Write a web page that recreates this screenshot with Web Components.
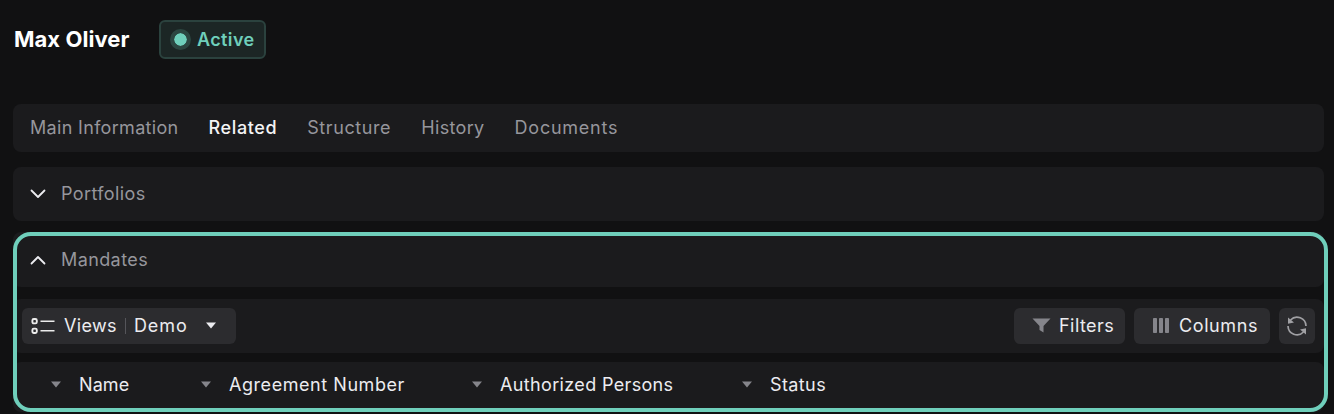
<!DOCTYPE html>
<html>
<head>
<meta charset="utf-8">
<style>
  html, body { margin: 0; height: 414px; overflow: hidden; background: #111112; }
  body { font-family: Inter, "Liberation Sans", sans-serif; color: #fff; }
</style>
</head>
<body>
<template id="caret"><svg width="12" height="7" viewBox="0 0 12 7"><path d="M1 0.5h10L6 6.5z" fill="currentColor"/></svg></template>

<detail-page>
  <person-header name="Max Oliver" status="Active"></person-header>
  <tab-bar active="Related"></tab-bar>
  <fold-panel title="Portfolios"></fold-panel>
  <mandates-box>
    <fold-panel title="Mandates" open></fold-panel>
    <grid-toolbar></grid-toolbar>
    <grid-head></grid-head>
  </mandates-box>
</detail-page>

<script>
const caret = () => document.getElementById('caret').innerHTML;

class DetailPage extends HTMLElement {
  constructor() {
    super();
    this.attachShadow({mode: 'open'}).innerHTML = `
    <style>
      :host { display: flex; flex-direction: column; padding: 0 10px 0 13px; }
    </style>
    <slot></slot>`;
  }
}

class PersonHeader extends HTMLElement {
  connectedCallback() {
    this.attachShadow({mode: 'open'}).innerHTML = `
    <style>
      :host { display: flex; align-items: center; height: 59px; padding-top: 20px; box-sizing: border-box; margin-bottom: 45px; }
      .name { font-size: 22px; font-weight: 700; width: 146px; padding-left: 1px; padding-bottom: 1px; box-sizing: border-box; letter-spacing: 0.05px; }
      .badge { display: flex; align-items: center; height: 39px; width: 107px; box-sizing: border-box; padding-left: 9px; gap: 6px;
        background: #1c2625; border: 2px solid #2b423e; border-radius: 6px; color: #6fcfbb; font-size: 18px; font-weight: 600; letter-spacing: 0.4px; }
      .dot { width: 13px; height: 13px; border-radius: 50%; background: #6fcfbb; border: 4px solid #2c4641; box-sizing: content-box; background-clip: padding-box; }
    </style>
    <span class="name">${this.getAttribute('name')}</span>
    <span class="badge"><span class="dot"></span>${this.getAttribute('status')}</span>`;
  }
}

class TabBar extends HTMLElement {
  connectedCallback() {
    const active = this.getAttribute('active');
    const tabs = [['Main Information', .32], ['Related', .6], ['Structure', .6], ['History', .35], ['Documents', .75]]
      .map(t => `<span class="tab ${t[0] === active ? 'on' : ''}" style="letter-spacing:${t[1]}px">${t[0]}</span>`).join('');
    this.attachShadow({mode: 'open'}).innerHTML = `
    <style>
      :host { display: flex; align-items: center; height: 48px; gap: 30px; padding-left: 17px; padding-bottom: 1px; box-sizing: border-box; background: #1b1b1d; border-radius: 8px; margin-bottom: 15px; font-size: 18px; }
      .tab { color: #96969c; }
      .on { color: #f4f4f5; font-weight: 500; }
    </style>
    ${tabs}`;
  }
}

class FoldPanel extends HTMLElement {
  connectedCallback() {
    const open = this.hasAttribute('open');
    this.attachShadow({mode: 'open'}).innerHTML = `
    <style>
      :host { display: flex; align-items: center; height: 54px; box-sizing: border-box; gap: 15px; padding-left: 17px; background: #1b1b1d; border-radius: 8px; margin-bottom: 11px; font-size: 18px; color: #96969c; letter-spacing: 0.4px; }
      :host([open]) { height: 55px; margin-bottom: 12px; }
      svg { width: 16px; height: 10px; color: #ececf0; }
      span { padding-bottom: 1px; }
    </style>
    <svg viewBox="0 0 16 10"><path d="${open ? 'M1.5 8.5L8 2l6.5 6.5' : 'M1.5 1.5L8 8l6.5-6.5'}" fill="none" stroke="currentColor" stroke-width="1.8" stroke-linecap="round" stroke-linejoin="round"/></svg>
    <span>${this.getAttribute('title')}</span>`;
  }
}

class MandatesBox extends HTMLElement {
  constructor() {
    super();
    this.attachShadow({mode: 'open'}).innerHTML = `
    <style>
      :host { display: flex; flex-direction: column; position: relative; height: 180px; }
      /* focus ring sits over the panels and sticks out past their right edge */
      :host::after { content: ""; position: absolute; top: 0; bottom: 0; left: 0; right: -4px; border: 4px solid #6fcfbb; border-radius: 18px; pointer-events: none; }
    </style>
    <slot></slot>`;
  }
}

class GridToolbar extends HTMLElement {
  connectedCallback() {
    this.attachShadow({mode: 'open'}).innerHTML = `
    <style>
      :host { display: flex; align-items: center; height: 54px; padding: 0 9px; background: #1b1b1d; border-radius: 8px; margin-bottom: 9px; font-size: 18px; color: #ececf0; }
      .btn { display: flex; align-items: center; height: 36px; background: #2c2c2f; border-radius: 6px; box-sizing: border-box; padding-bottom: 1px; }
      .views { width: 214px; padding-left: 9px; }
      .views .a { letter-spacing: 0.35px; }
      .views .b { letter-spacing: 0.9px; }
      .views .sep { width: 1px; height: 16px; background: #55555a; margin: 0 8px; }
      .views .car { margin-left: 17px; display: flex; }
      .views svg.list { margin-right: 9px; }
      .space { flex: 1; }
      .filters { width: 111px; padding-left: 18px; gap: 8px; margin-right: 9px; letter-spacing: 0.45px; }
      .columns { width: 136px; padding-left: 19px; gap: 10px; margin-right: 9px; letter-spacing: 0.6px; }
      .refresh { width: 36px; justify-content: center; padding: 0; }
    </style>
    <span class="btn views">
      <svg class="list" width="24" height="18" viewBox="0 0 24 18" fill="none" stroke="#ececec" stroke-width="1.9"><rect x="1.4" y="2" width="4.4" height="4.4" rx="1.4"/><rect x="1.4" y="11.6" width="4.4" height="4.4" rx="1.4"/><path d="M9.5 4.2H23.5M9.5 13.8H23.5" stroke-width="1.6"/></svg>
      <span class="a">Views</span><span class="sep"></span><span class="b">Demo</span><span class="car">${caret()}</span>
    </span>
    <span class="space"></span>
    <span class="btn filters">
      <svg width="19" height="15" viewBox="0 0 19 15"><path d="M0.5 0.5H18.5L11.5 8V14.5L7.5 12V8z" fill="#85858b"/></svg>
      Filters
    </span>
    <span class="btn columns">
      <svg width="16" height="15" viewBox="0 0 16 15" fill="#85858b"><rect x="0" y="0" width="4" height="15" rx="0.8"/><rect x="6" y="0" width="4" height="15" rx="0.8"/><rect x="12" y="0" width="4" height="15" rx="0.8"/></svg>
      Columns
    </span>
    <span class="btn refresh">
      <svg width="22" height="24" viewBox="0 0 22 24"><g fill="none" stroke="#a0a0a4" stroke-width="1.7"><path d="M4.5 6A9 9 0 0 1 20 12"/><path d="M17.5 18A9 9 0 0 1 2 12"/></g><path d="M2 3.5L8 8.5L2 9.8z" fill="#a0a0a4"/><path d="M20 20.5L14 15.5L20 14.2z" fill="#a0a0a4"/></svg>
    </span>`;
  }
}

class GridHead extends HTMLElement {
  connectedCallback() {
    const cols = [['Name', 150, .1], ['Agreement Number', 271, .55], ['Authorized Persons', 270, .35], ['Status', 120, .4]];
    this.attachShadow({mode: 'open'}).innerHTML = `
    <style>
      :host { display: flex; align-items: center; height: 50px; padding-left: 37px; padding-bottom: 5px; box-sizing: border-box; background: #1b1b1d; border-radius: 8px; font-size: 18px; color: #ececf0; }
      .col { display: flex; align-items: center; gap: 17px; box-sizing: border-box; }
      .col svg { color: #85858b; }
    </style>
    ${cols.map(c => `<span class="col" style="width:${c[1]}px">${caret()}<span style="letter-spacing:${c[2]}px">${c[0]}</span></span>`).join('')}`;
  }
}

customElements.define('detail-page', DetailPage);
customElements.define('person-header', PersonHeader);
customElements.define('tab-bar', TabBar);
customElements.define('fold-panel', FoldPanel);
customElements.define('mandates-box', MandatesBox);
customElements.define('grid-toolbar', GridToolbar);
customElements.define('grid-head', GridHead);
</script>
</body>
</html>
